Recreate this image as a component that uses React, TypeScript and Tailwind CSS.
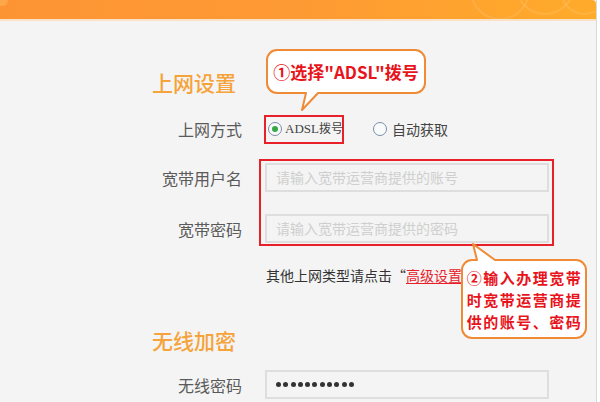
import React from "react";

const c1 =
  "M11,1 H149 A10,10 0 0 1 159,11 V34 A10,10 0 0 1 149,44 H52 L36,61 L40,44 H11 A10,10 0 0 1 1,34 V11 A10,10 0 0 1 11,1 Z";
const c2 =
  "M11,18 H16 L12,2 L34,18 H115 A10,10 0 0 1 125,28 V86 A10,10 0 0 1 115,96 H11 A10,10 0 0 1 1,86 V28 A10,10 0 0 1 11,18 Z";

function Label({ children }: { children: React.ReactNode }) {
  return <div className="w-[242px] shrink-0 text-right text-[16px] text-[#5a5a5a] leading-none">{children}</div>;
}

const dots = [0, 1, 2, 3, 4, 5, 6, 7, 8, 9, 10];

function Input({ placeholder, masked }: { placeholder?: string; masked?: boolean }) {
  return (
    <div className="ml-[23px] w-[284px] h-[29px] border-2 border-[#dedede] bg-[#f4f4f4] flex items-center pl-[9px]">
      {masked ? (
        <div className="flex items-center gap-[2.3px]" aria-label="password">
          {dots.map((d) => (
            <span key={d} className="w-[5px] h-[5px] rounded-full bg-[#333]" />
          ))}
        </div>
      ) : (
        <span className="text-[14px] text-[#cfcfcf]">{placeholder}</span>
      )}
    </div>
  );
}

function Radio({ checked }: { checked?: boolean }) {
  return (
    <span className="w-[14px] h-[14px] rounded-full border border-[#7c8fa6] bg-[#f8fafc] flex items-center justify-center shrink-0">
      {checked && <span className="w-[6px] h-[6px] rounded-full bg-[#35a845]" />}
    </span>
  );
}

export default function App() {
  return (
    <div className="relative w-[600px] h-[402px] overflow-hidden bg-white font-['Noto_Sans_CJK_SC',sans-serif]">
      <div className="w-[597px] h-full bg-[#f4f4f4] border-r border-[#d9d9d9] flex flex-col">
        <div className="relative h-[19px] shrink-0 overflow-hidden bg-linear-to-r from-[#fd9434] via-[#fe9a33] to-[#ffab2a] rounded-tr-[4px]">
          <div className="absolute -left-[4px] -top-[6px] w-[12px] h-[12px] rounded-full bg-[#ffb25a]/60" />
          <div className="absolute left-[470px] -top-[40px] w-[60px] h-[60px] rounded-full border-2 border-white/10" />
          <div className="absolute left-[515px] -top-[45px] w-[60px] h-[60px] rounded-full border-2 border-white/10" />
          <div className="absolute left-[560px] -top-[35px] w-[50px] h-[50px] rounded-full border-2 border-white/10" />
        </div>
        <div className="h-[2px] shrink-0 bg-[#fbe2c6]" />

        <div className="mt-[49px] h-[24px] flex items-center pl-[152px] text-[21px] font-medium text-[#f5a33a] leading-none">上网设置</div>

        <div className="mt-[21px] h-[28px] flex items-center">
          <Label>上网方式</Label>
          <div className="ml-[22px] w-[80px] h-[29px] border-2 border-[#e8202a] flex items-center pl-[2px] gap-[3px] whitespace-nowrap">
            <Radio checked />
            <span className="text-[12px] text-[#444] whitespace-nowrap">
              <span className="font-['Liberation_Serif',serif] text-[13px]">ADSL</span>拨号
            </span>
          </div>
          <div className="ml-[29px] flex items-center gap-[5px]">
            <Radio />
            <span className="text-[14px] text-[#444]">自动获取</span>
          </div>
        </div>

        <div className="mt-[20px] h-[29px] flex items-center">
          <Label>宽带用户名</Label>
          <Input placeholder="请输入宽带运营商提供的账号" />
        </div>

        <div className="mt-[22px] h-[29px] flex items-center">
          <Label>宽带密码</Label>
          <Input placeholder="请输入宽带运营商提供的密码" />
        </div>

        <div className="mt-[22px] h-[20px] flex items-center pl-[266px] text-[14px] text-[#333] whitespace-nowrap">
          其他上网类型请点击“<span className="text-[#e8202a] underline underline-offset-2">高级设置</span>
        </div>

        <div className="mt-[43px] h-[24px] flex items-center pl-[152px] text-[21px] font-medium text-[#f5a33a] leading-none">无线加密</div>

        <div className="mt-[18px] h-[29px] flex items-center">
          <Label>无线密码</Label>
          <Input masked />
        </div>
      </div>

      {/* annotation: red box around inputs */}
      <div className="absolute left-[259px] top-[159px] w-[295px] h-[87px] border-2 border-[#e8202a]" />

      {/* callout 1 */}
      <div className="absolute left-[266px] top-[49px] w-[160px] h-[63px]">
        <svg width="160" height="63" className="absolute inset-0">
          <path d={c1} fill="#ffffff" stroke="#ef8a36" strokeWidth="2" strokeLinejoin="round" />
        </svg>
        <div className="absolute left-0 top-0 w-[160px] h-[45px] flex items-center justify-center text-[17px] font-bold text-[#e8141c] leading-none whitespace-nowrap">
          ①选择"ADSL"拨号
        </div>
      </div>

      {/* callout 2 */}
      <div className="absolute left-[461px] top-[242px] w-[127px] h-[98px]">
        <svg width="127" height="98" className="absolute inset-0">
          <path d={c2} fill="#ffffff" stroke="#ef8a36" strokeWidth="2" strokeLinejoin="round" />
        </svg>
        <div className="absolute left-0 top-[18px] w-[127px] h-[79px] flex flex-col items-center justify-center text-[15px] font-bold text-[#e8141c] leading-[22px] tracking-[1.5px] whitespace-nowrap">
          <span>②输入办理宽带</span>
          <span>时宽带运营商提</span>
          <span>供的账号、密码</span>
        </div>
      </div>
    </div>
  );
}
